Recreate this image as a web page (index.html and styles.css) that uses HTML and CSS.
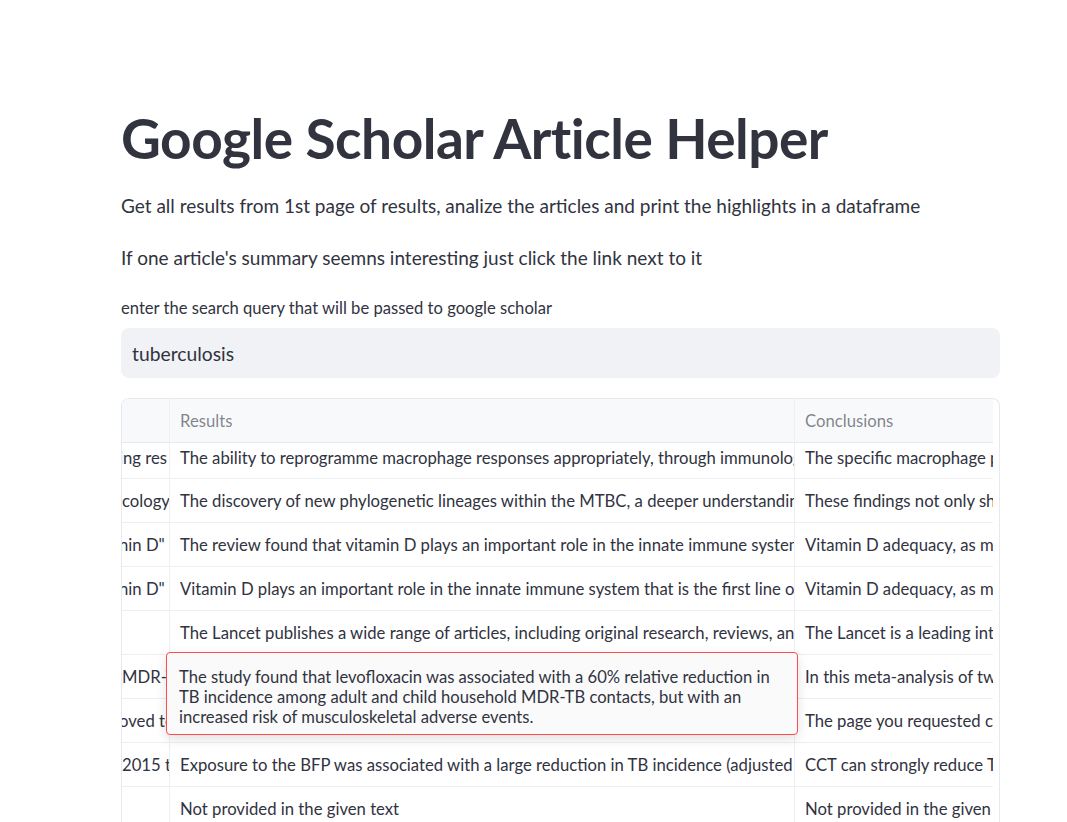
FILE: index.html
```html
<!DOCTYPE html>
<html lang="en">
<head>
<meta charset="utf-8">
<title>Google Scholar Article Helper</title>
<link rel="stylesheet" href="styles.css">
</head>
<body>
<main class="main">
  <h1 class="title">Google Scholar Article Helper</h1>
  <p class="para p1">Get all results from 1st page of results, analize the articles and print the highlights in a dataframe</p>
  <p class="para p2">If one article's summary seemns interesting just click the link next to it</p>
  <label class="label">enter the search query that will be passed to google scholar</label>
  <div class="input">tuberculosis</div>

  <div class="frame">
    <div class="grid">
      <div class="cell head c1"></div>
      <div class="cell head c2">Results</div>
      <div class="cell head c3">Conclusions</div>

      <div class="cell first c1"><span class="cut">ing res</span></div>
      <div class="cell first c2">The ability to reprogramme macrophage responses appropriately, through immunological interventions</div>
      <div class="cell first c3">The specific macrophage phenotype</div>

      <div class="cell c1">cology</div>
      <div class="cell c2">The discovery of new phylogenetic lineages within the MTBC, a deeper understanding of the</div>
      <div class="cell c3">These findings not only show</div>

      <div class="cell c1"><span class="cut">nin D" a</span></div>
      <div class="cell c2">The review found that vitamin D plays an important role in the innate immune system</div>
      <div class="cell c3">Vitamin D adequacy, as measured</div>

      <div class="cell c1"><span class="cut">nin D" a</span></div>
      <div class="cell c2">Vitamin D plays an important role in the innate immune system that is the first line of defense</div>
      <div class="cell c3">Vitamin D adequacy, as measured</div>

      <div class="cell c1"></div>
      <div class="cell c2">The Lancet publishes a wide range of articles, including original research, reviews, and</div>
      <div class="cell c3">The Lancet is a leading international</div>

      <div class="cell c1">MDR-TB</div>
      <div class="cell c2">The study found that levofloxacin was associated with a 60% relative reduction in TB</div>
      <div class="cell c3">In this meta-analysis of two trials</div>

      <div class="cell c1"><span class="cut">oved to</span></div>
      <div class="cell c2">The page you requested could not be found</div>
      <div class="cell c3">The page you requested could not</div>

      <div class="cell c1">2015 to</div>
      <div class="cell c2">Exposure to the BFP was associated with a large reduction in TB incidence (adjusted rate ratio</div>
      <div class="cell c3">CCT can strongly reduce TB incidence</div>

      <div class="cell c1"></div>
      <div class="cell c2">Not provided in the given text</div>
      <div class="cell c3">Not provided in the given text</div>
    </div>

    <div class="tooltip">The study found that levofloxacin was associated with a 60% relative reduction in TB incidence among adult and child household MDR-TB contacts, but with an increased risk of musculoskeletal adverse events.</div>
  </div>
</main>
</body>
</html>
```

FILE: styles.css
```css
* { box-sizing: border-box; }
html, body { margin: 0; padding: 0; background: #ffffff; }
body {
  font-family: "Lato", "Noto Sans", sans-serif;
  color: #31333f;
  height: 822px;
  overflow: hidden;
}
.main {
  width: 879px;
  margin-left: 121px;
  padding-top: 104px;
}
.title {
  margin: 0;
  font-size: 55px;
  font-weight: 700;
  line-height: 68px;
  letter-spacing: -0.5px;
}
.para {
  margin: 0;
  font-size: 19px;
  line-height: 26px;
}
.p1 { margin-top: 21px; }
.p2 { margin-top: 26px; }
.label {
  display: block;
  margin-top: 27px;
  font-size: 16.6px;
  line-height: 20px;
}
.input {
  margin-top: 10px;
  height: 50px;
  background: #f0f2f6;
  border-radius: 8px;
  padding: 0 11px;
  display: flex;
  align-items: center;
  font-size: 19.3px;
}
.frame {
  position: relative;
  margin-top: 20px;
  height: 460px;
  border: 1px solid #e6e9ef;
  border-bottom: none;
  border-radius: 8px 8px 0 0;
  overflow: hidden;
  padding-right: 6px;
}
.grid {
  display: grid;
  grid-template-columns: 48px 625px 198px;
  grid-template-rows: 44px 36px;
  grid-auto-rows: 44px;
  background: #ffffff;
}
.cell {
  white-space: nowrap;
  overflow: hidden;
  font-size: 16.7px;
  line-height: 20px;
  padding: 0 0 0 10px;
  display: flex;
  align-items: center;
  border-bottom: 1px solid #edeff3;
  border-right: 1px solid #edeff3;
}
.c1 { padding-left: 0; }
.c3 { border-right: none; }
.head {
  background: #f8f9fb;
  color: rgba(49, 51, 63, 0.6);
  border-bottom-color: #e6e9ef;
}
.first { align-items: flex-start; padding-top: 5px; }
.cut { margin-left: -3px; }
.tooltip {
  position: absolute;
  left: 44px;
  top: 253px;
  width: 632px;
  height: 83px;
  background: #fafafa;
  border: 1px solid #ff4b4b;
  border-radius: 4px;
  padding: 14px 12px 0 12px;
  font-size: 16.6px;
  line-height: 20px;
  color: #31333f;
  box-shadow: 0 4px 12px rgba(0, 0, 0, 0.12);
}
```
